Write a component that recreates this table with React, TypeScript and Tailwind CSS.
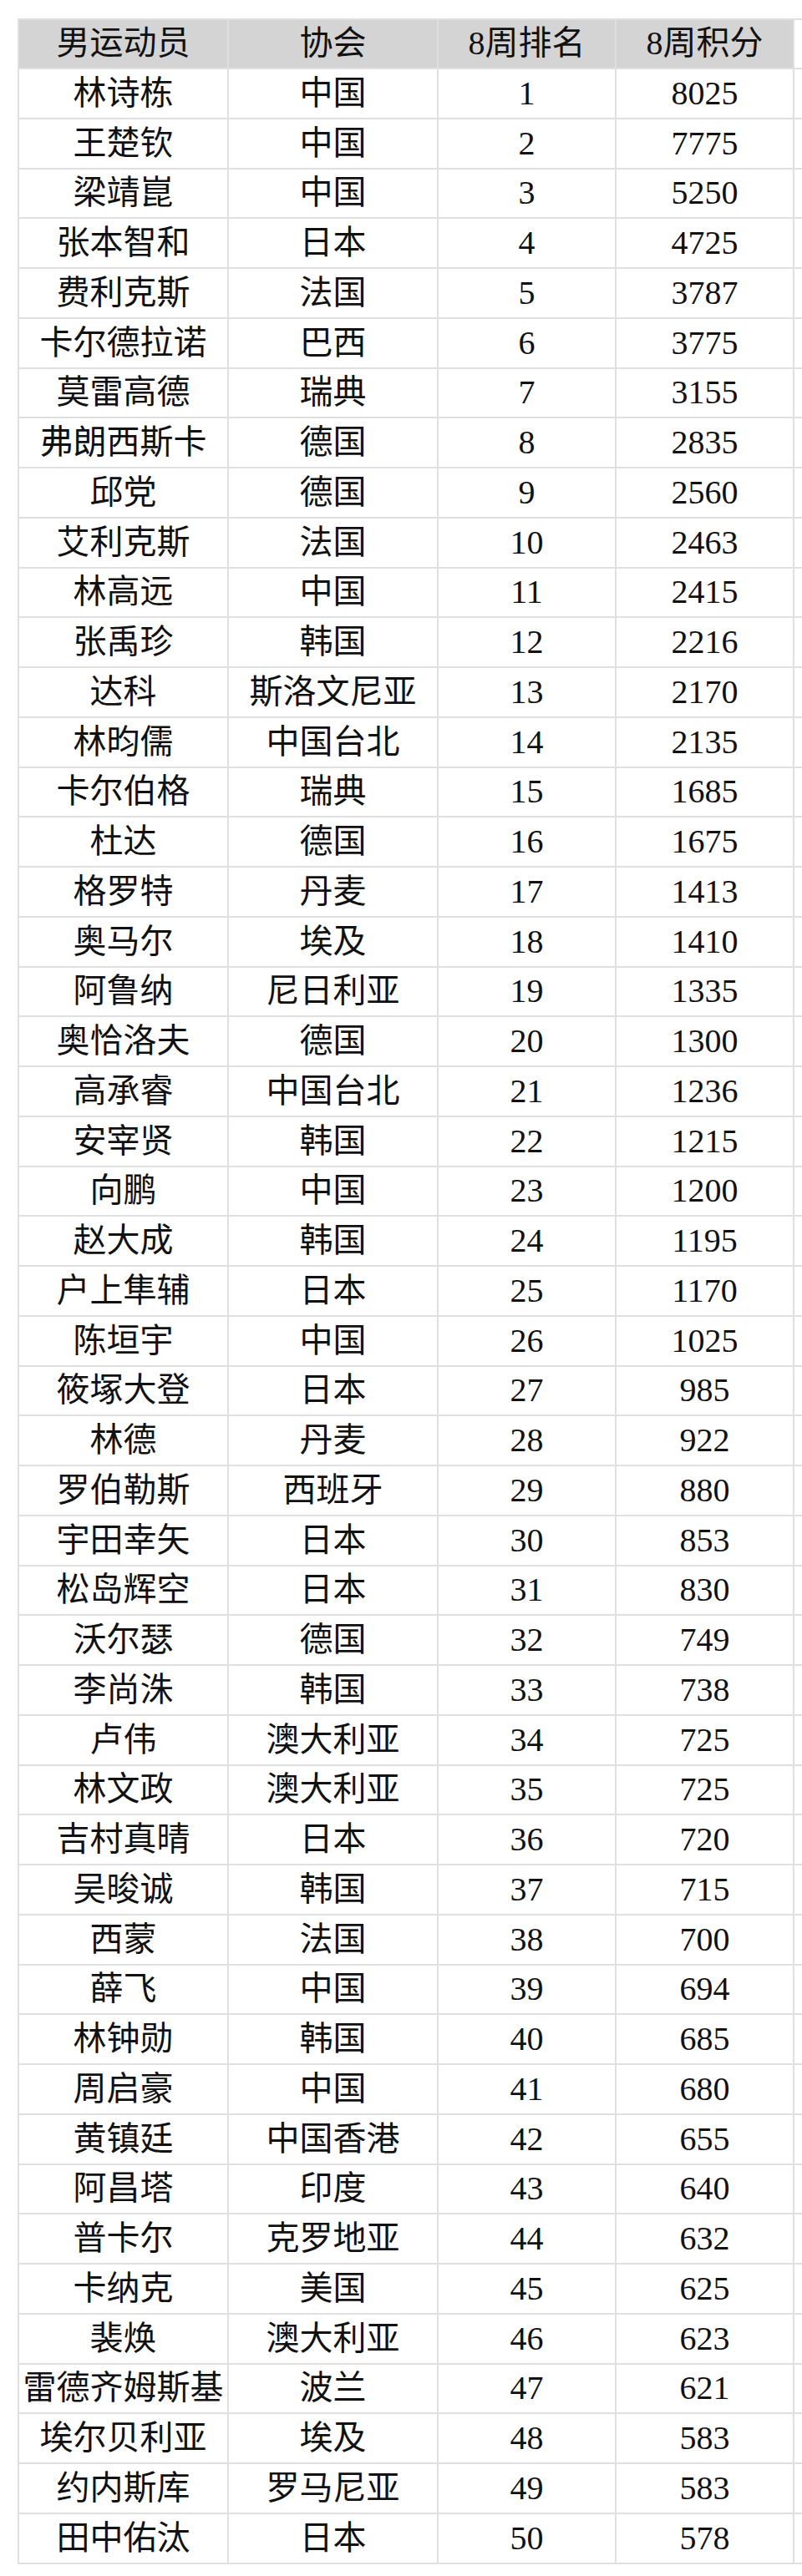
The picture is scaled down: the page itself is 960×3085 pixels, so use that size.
const rows: [string, string, number, number][] = [
  ["林诗栋", "中国", 1, 8025],
  ["王楚钦", "中国", 2, 7775],
  ["梁靖崑", "中国", 3, 5250],
  ["张本智和", "日本", 4, 4725],
  ["费利克斯", "法国", 5, 3787],
  ["卡尔德拉诺", "巴西", 6, 3775],
  ["莫雷高德", "瑞典", 7, 3155],
  ["弗朗西斯卡", "德国", 8, 2835],
  ["邱党", "德国", 9, 2560],
  ["艾利克斯", "法国", 10, 2463],
  ["林高远", "中国", 11, 2415],
  ["张禹珍", "韩国", 12, 2216],
  ["达科", "斯洛文尼亚", 13, 2170],
  ["林昀儒", "中国台北", 14, 2135],
  ["卡尔伯格", "瑞典", 15, 1685],
  ["杜达", "德国", 16, 1675],
  ["格罗特", "丹麦", 17, 1413],
  ["奥马尔", "埃及", 18, 1410],
  ["阿鲁纳", "尼日利亚", 19, 1335],
  ["奥恰洛夫", "德国", 20, 1300],
  ["高承睿", "中国台北", 21, 1236],
  ["安宰贤", "韩国", 22, 1215],
  ["向鹏", "中国", 23, 1200],
  ["赵大成", "韩国", 24, 1195],
  ["户上隼辅", "日本", 25, 1170],
  ["陈垣宇", "中国", 26, 1025],
  ["筱塚大登", "日本", 27, 985],
  ["林德", "丹麦", 28, 922],
  ["罗伯勒斯", "西班牙", 29, 880],
  ["宇田幸矢", "日本", 30, 853],
  ["松岛辉空", "日本", 31, 830],
  ["沃尔瑟", "德国", 32, 749],
  ["李尚洙", "韩国", 33, 738],
  ["卢伟", "澳大利亚", 34, 725],
  ["林文政", "澳大利亚", 35, 725],
  ["吉村真晴", "日本", 36, 720],
  ["吴晙诚", "韩国", 37, 715],
  ["西蒙", "法国", 38, 700],
  ["薛飞", "中国", 39, 694],
  ["林钟勋", "韩国", 40, 685],
  ["周启豪", "中国", 41, 680],
  ["黄镇廷", "中国香港", 42, 655],
  ["阿昌塔", "印度", 43, 640],
  ["普卡尔", "克罗地亚", 44, 632],
  ["卡纳克", "美国", 45, 625],
  ["裴焕", "澳大利亚", 46, 623],
  ["雷德齐姆斯基", "波兰", 47, 621],
  ["埃尔贝利亚", "埃及", 48, 583],
  ["约内斯库", "罗马尼亚", 49, 583],
  ["田中佑汰", "日本", 50, 578],
];

const headers = ["男运动员", "协会", "8周排名", "8周积分"];

const cell =
  "flex items-center justify-center border-r-2 border-b-2 border-[#e0e0e0] whitespace-nowrap";

export default function App() {
  return (
    <div
      className="w-[960px] h-[3085px] overflow-hidden bg-white pt-[22px] pl-[21px] text-[#111] text-[40px] leading-none"
      style={{ fontFamily: '"Liberation Serif", "Noto Sans CJK SC", serif' }}
    >
      <div className="grid w-[1000px] grid-cols-[251px_251px_213px_213px_72px] border-t-2 border-l-2 border-[#e0e0e0]">
        {headers.map((h) => (
          <div key={h} className={`${cell} h-[59px] bg-[#d4d4d4] pb-[2px]`}>
            {h}
          </div>
        ))}
        <div className={`${cell} h-[59px] bg-white`} />
        {rows.map(([name, assoc, rank, pts]) => (
          <div key={rank} className="contents">
            <div className={`${cell} h-[59.75px]`}>{name}</div>
            <div className={`${cell} h-[59.75px]`}>{assoc}</div>
            <div className={`${cell} h-[59.75px]`}>{rank}</div>
            <div className={`${cell} h-[59.75px]`}>{pts}</div>
            <div className={`${cell} h-[59.75px]`} />
          </div>
        ))}
      </div>
    </div>
  );
}
